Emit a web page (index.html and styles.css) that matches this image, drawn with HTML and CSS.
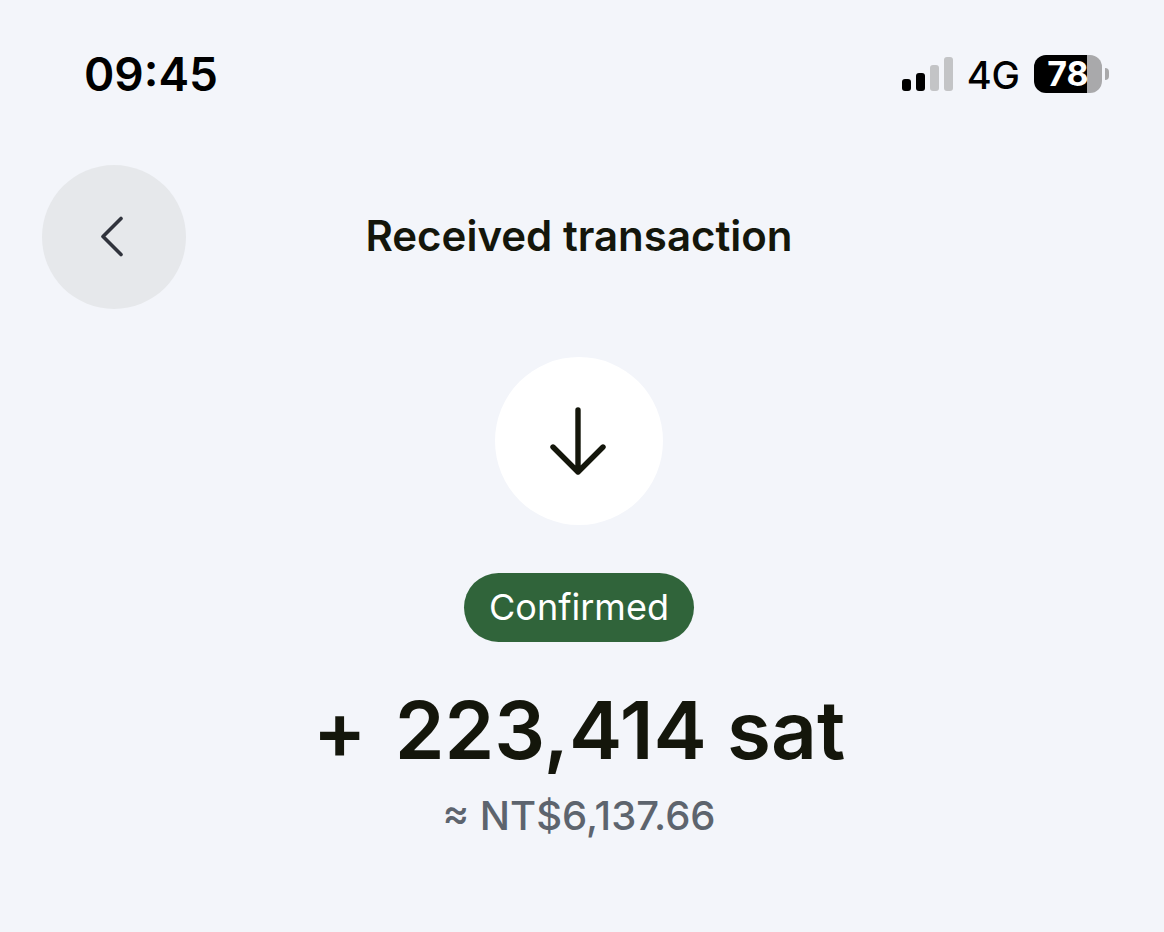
FILE: index.html
```
<!DOCTYPE html>
<html lang="en">
<head>
    <meta charset="UTF-8">
    <meta name="viewport" content="width=device-width, initial-scale=1.0">
    <title>Received transaction</title>
    <link rel="stylesheet" href="styles.css">
</head>
<body>
    <!-- Status bar -->
    <div class="status-bar">
        <time class="clock">09:45</time>
        <div class="status-icons">
            <svg class="signal" width="51" height="34" viewBox="0 0 51 34" aria-hidden="true">
                <rect x="0" y="22" width="9" height="12" rx="3" fill="#000"/>
                <rect x="14" y="16" width="9" height="18" rx="3" fill="#000"/>
                <rect x="28" y="8" width="9" height="26" rx="3" fill="#c3c4c6"/>
                <rect x="42" y="0" width="9" height="34" rx="3" fill="#c3c4c6"/>
            </svg>
            <span class="network">4G</span>
            <div class="battery">
                <span class="battery-level">78</span>
            </div>
        </div>
    </div>

    <!-- Header -->
    <header class="header">
        <button class="back-button" type="button" aria-label="Back">
            <svg width="28" height="42" viewBox="0 0 28 42" fill="none" stroke="#30333c" stroke-width="3.6" stroke-linecap="round" stroke-linejoin="round">
                <path d="M21 2.5 3 20.5 21 38.5"/>
            </svg>
        </button>
        <h1>Received transaction</h1>
    </header>

    <!-- Transaction summary -->
    <main class="summary">
        <div class="direction-icon">
            <svg width="58" height="70" viewBox="0 0 58 70" fill="none" stroke="#14160b" stroke-width="5.4" stroke-linecap="round" stroke-linejoin="round" aria-hidden="true">
                <path d="M28 4V66M3 41 28 66 53 41"/>
            </svg>
        </div>
        <span class="status-badge">Confirmed</span>
        <p class="amount"><span class="sign">+</span><span>223,414 sat</span></p>
        <p class="fiat">≈ NT$6,137.66</p>
    </main>
</body>
</html>
```

FILE: styles.css
```
body {
    font-family: Inter, sans-serif;
    margin: 0;
    background-color: #f3f5fa;
    color: #14160b;
}

/* Status bar */
.status-bar {
    display: flex;
    justify-content: space-between;
    align-items: center;
    height: 48px;
    padding: 50px 54px 0 84px;
    color: #000;
}

.clock {
    font-size: 46px;
    font-weight: 600;
}

.status-icons {
    display: flex;
    align-items: center;
    gap: 14px;
}

.network {
    padding-top: 2px;
    font-size: 38px;
    font-weight: 500;
}

.battery {
    position: relative;
    width: 68px;
    height: 38px;
    margin-right: 8px;
    border-radius: 12px;
    background: linear-gradient(to right, #000 78%, #a9a9ab 78%);
    color: #fff;
    text-align: center;
}

.battery::after {
    content: "";
    position: absolute;
    top: 13px;
    right: -7px;
    width: 4px;
    height: 12px;
    border-radius: 0 6px 6px 0;
    background-color: #a9a9ab;
}

.battery-level {
    font-size: 34px;
    font-weight: 700;
    line-height: 38px;
}

/* Header */
.header {
    display: grid;
    grid-template-columns: 144px 1fr 144px;
    align-items: center;
    padding: 67px 48px 0 42px;
}

.back-button {
    display: flex;
    align-items: center;
    justify-content: center;
    width: 144px;
    height: 144px;
    padding: 0;
    border: none;
    border-radius: 50%;
    background-color: #e6e8eb;
    cursor: pointer;
}

h1 {
    margin: 0;
    padding-bottom: 4px;
    font-size: 42px;
    font-weight: 600;
    text-align: center;
}

/* Transaction summary */
.summary {
    display: flex;
    flex-direction: column;
    align-items: center;
    padding: 48px 48px 84px 42px;
}

.direction-icon {
    display: flex;
    align-items: center;
    justify-content: center;
    width: 168px;
    height: 168px;
    border-radius: 50%;
    background-color: #fff;
}

.status-badge {
    margin-top: 48px;
    padding: 0 25px;
    border-radius: 35px;
    background-color: #30643a;
    color: #fff;
    font-size: 36px;
    line-height: 68px;
    padding-bottom: 1px;
}

.amount {
    display: flex;
    gap: 28px;
    margin: 32px 0 0;
    font-size: 80px;
    font-weight: 600;
    line-height: 112px;
}

.fiat {
    margin: 0;
    color: #5d646e;
    font-size: 40px;
    font-weight: 500;
    line-height: 60px;
}
```
